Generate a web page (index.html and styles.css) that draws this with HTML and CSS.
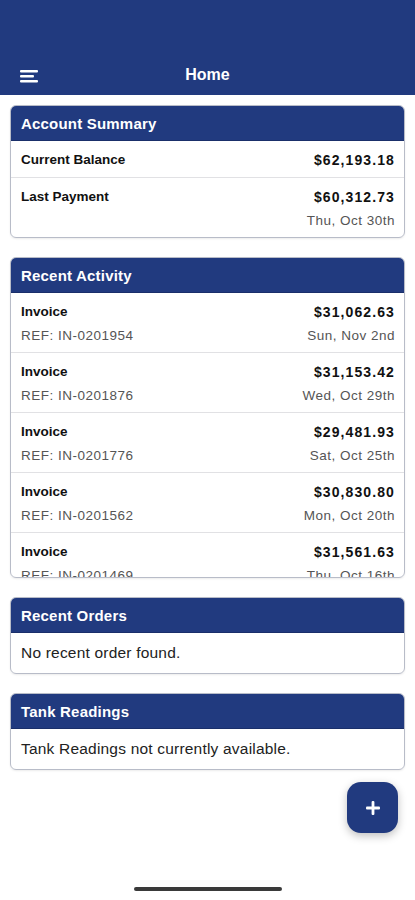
FILE: index.html
```html
<!DOCTYPE html>
<html lang="en">
<head>
  <meta charset="UTF-8">
  <meta name="viewport" content="width=device-width, initial-scale=1.0">
  <title>Home</title>
  <link rel="stylesheet" href="styles.css">
</head>
<body>
  <div class="topo">
    <div class="barra">
      <svg class="menu" width="18" height="14" viewBox="0 0 18 14">
        <rect x="0" y="1" width="18" height="2.4" rx="1" fill="#fff"/>
        <rect x="0" y="6" width="14" height="2.4" rx="1" fill="#fff"/>
        <rect x="0" y="11" width="18" height="2.4" rx="1" fill="#fff"/>
      </svg>
      <h1>Home</h1>
    </div>
  </div>

  <div class="conteudo">
    <div class="card">
      <div class="card-titulo">Account Summary</div>
      <div class="linha curta">
        <span class="rotulo">Current Balance</span>
        <span class="valor">$62,193.18</span>
      </div>
      <div class="linha">
        <div class="col">
          <span class="rotulo">Last Payment</span>
        </div>
        <div class="col dir">
          <span class="valor">$60,312.73</span>
          <span class="sub">Thu, Oct 30th</span>
        </div>
      </div>
    </div>

    <div class="card">
      <div class="card-titulo">Recent Activity</div>
      <div class="lista">
        <div class="linha">
          <div class="col"><span class="rotulo">Invoice</span><span class="sub">REF: IN-0201954</span></div>
          <div class="col dir"><span class="valor">$31,062.63</span><span class="sub">Sun, Nov 2nd</span></div>
        </div>
        <div class="linha">
          <div class="col"><span class="rotulo">Invoice</span><span class="sub">REF: IN-0201876</span></div>
          <div class="col dir"><span class="valor">$31,153.42</span><span class="sub">Wed, Oct 29th</span></div>
        </div>
        <div class="linha">
          <div class="col"><span class="rotulo">Invoice</span><span class="sub">REF: IN-0201776</span></div>
          <div class="col dir"><span class="valor">$29,481.93</span><span class="sub">Sat, Oct 25th</span></div>
        </div>
        <div class="linha">
          <div class="col"><span class="rotulo">Invoice</span><span class="sub">REF: IN-0201562</span></div>
          <div class="col dir"><span class="valor">$30,830.80</span><span class="sub">Mon, Oct 20th</span></div>
        </div>
        <div class="linha">
          <div class="col"><span class="rotulo">Invoice</span><span class="sub">REF: IN-0201469</span></div>
          <div class="col dir"><span class="valor">$31,561.63</span><span class="sub">Thu, Oct 16th</span></div>
        </div>
      </div>
    </div>

    <div class="card">
      <div class="card-titulo">Recent Orders</div>
      <div class="vazio">No recent order found.</div>
    </div>

    <div class="card">
      <div class="card-titulo">Tank Readings</div>
      <div class="vazio">Tank Readings not currently available.</div>
    </div>
  </div>

  <div class="fab">
    <svg width="16" height="16" viewBox="0 0 16 16">
      <rect x="6.6" y="1" width="2.8" height="14" rx="1" fill="#fff"/>
      <rect x="1" y="6.6" width="14" height="2.8" rx="1" fill="#fff"/>
    </svg>
  </div>

  <div class="indicador"></div>
</body>
</html>
```

FILE: styles.css
```css
body {
  font-family: "Liberation Sans", Arial, sans-serif;
  background-color: #fff;
  color: #111;
  margin: 0;
  padding: 0;
  width: 415px;
  height: 900px;
  position: relative;
  overflow: hidden;
}

.topo {
  background-color: #213a7f;
  height: 95px;
  display: flex;
  flex-direction: column;
  justify-content: flex-end;
}

.barra {
  height: 40px;
  display: flex;
  align-items: center;
  justify-content: center;
  position: relative;
}

.menu {
  position: absolute;
  left: 20px;
  top: 14px;
}

.barra h1 {
  margin: 0;
  color: #fff;
  font-size: 16px;
  font-weight: bold;
}

.conteudo {
  padding: 10px 10px 0;
  display: flex;
  flex-direction: column;
  gap: 19px;
}

.card {
  border: 1px solid #b8bcc8;
  border-radius: 6px;
  overflow: hidden;
  box-shadow: 0 1px 2px rgba(0, 0, 0, 0.08);
}

.card-titulo {
  background-color: #213a7f;
  color: #fff;
  font-weight: bold;
  font-size: 15px;
  letter-spacing: 0.2px;
  height: 34px;
  line-height: 35px;
  padding: 0 10px;
  border-bottom: 1px solid #1a2f6a;
}

.linha {
  display: flex;
  justify-content: space-between;
  padding: 7px 9px 4px 10px;
  border-bottom: 1px solid #e1e1e4;
}

.linha:last-child {
  border-bottom: none;
}

.linha.curta {
  padding-bottom: 5px;
}

.col {
  display: flex;
  flex-direction: column;
}

.col.dir {
  align-items: flex-end;
}

.rotulo {
  font-size: 13.5px;
  font-weight: bold;
  line-height: 24px;
}

.valor {
  font-size: 14px;
  font-weight: bold;
  letter-spacing: 1.1px;
  line-height: 24px;
}

.sub {
  font-size: 13.5px;
  color: #555;
  letter-spacing: 0.5px;
  line-height: 24px;
}

.lista {
  height: 284px;
  overflow: hidden;
}

.vazio {
  font-size: 15.5px;
  color: #222;
  letter-spacing: 0.2px;
  padding: 0 10px;
  line-height: 40px;
}

.fab {
  position: absolute;
  left: 347px;
  top: 782px;
  width: 51px;
  height: 51px;
  border-radius: 14px;
  background-color: #213a7f;
  display: flex;
  align-items: center;
  justify-content: center;
  box-shadow: 0 3px 8px rgba(0, 0, 0, 0.25);
}

.indicador {
  position: absolute;
  left: 134px;
  top: 887px;
  width: 148px;
  height: 4px;
  border-radius: 2px;
  background-color: #3a3a3a;
}
```
